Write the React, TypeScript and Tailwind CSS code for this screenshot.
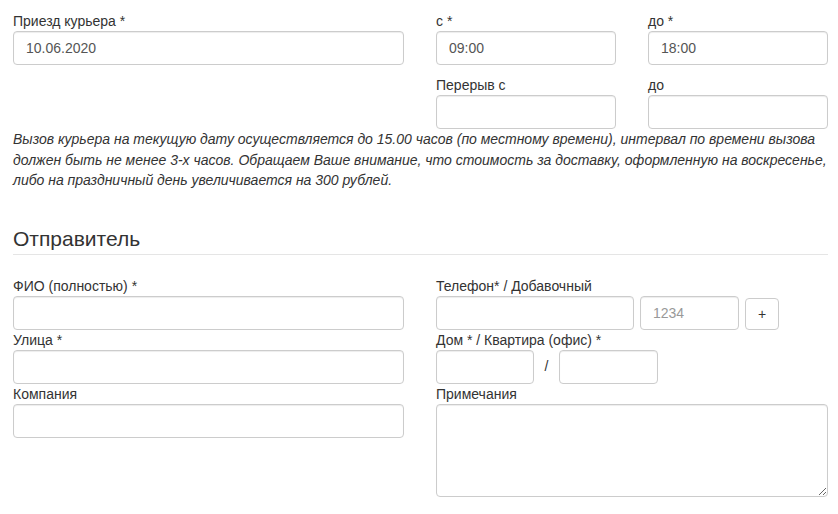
const input =
  "block h-[34px] w-full rounded-[4px] border border-[#ccc] bg-white px-3 text-[14px] text-[#555] shadow-[inset_0_1px_1px_rgba(0,0,0,0.075)] outline-none placeholder:text-[#999]";
const label = "block h-[20px] text-[14px] leading-[20px] text-[#333]";

const Field = ({ title, value }: { title: string; value?: string }) => (
  <div>
    <label className={label}>{title}</label>
    <input className={input} defaultValue={value} />
  </div>
);

const App = () => {
  return (
    <div className="min-h-[514px] bg-white px-[13px] pt-[11px] font-['Liberation_Sans',Arial,sans-serif] text-[#333]">
      {/* время приезда */}
      <div className="grid grid-cols-[391px_392px] gap-x-[32px]">
        <Field title="Приезд курьера *" value="10.06.2020" />
        <div className="grid grid-cols-[180px_180px] gap-x-[32px] gap-y-[10px]">
          <Field title="с *" value="09:00" />
          <Field title="до *" value="18:00" />
          <Field title="Перерыв с" />
          <Field title="до" />
        </div>
      </div>

      <p className="mt-0 w-[815px] text-[14px] italic leading-[20.5px] text-[#333]">
        Вызов курьера на текущую дату осуществляется до 15.00 часов (по местному времени), интервал по времени вызова
        <br />
        должен быть не менее 3-х часов. Обращаем Ваше внимание, что стоимость за доставку, оформленную на воскресенье,
        <br />
        либо на праздничный день увеличивается на 300 рублей.
      </p>

      <div className="mt-[36px] w-[815px] border-b border-[#e5e5e5] pb-[4px]">
        <h3 className="text-[21px] leading-[23px] text-[#333]">Отправитель</h3>
      </div>

      {/* отправитель */}
      <div className="mt-[21px] grid grid-cols-[391px_392px] gap-x-[32px]">
        <div className="flex flex-col">
          <Field title="ФИО (полностью) *" />
          <Field title="Улица *" />
          <Field title="Компания" />
        </div>
        <div className="flex flex-col">
          <label className={label}>Телефон* / Добавочный</label>
          <div className="flex items-start gap-[6px]">
            <input className={input + " !w-[198px]"} />
            <input className={input + " !w-[99px]"} placeholder="1234" />
            <button className="mt-[2px] h-[32px] w-[34px] rounded-[4px] border border-[#ccc] bg-white text-[14px] leading-none text-[#333]">
              +
            </button>
          </div>
          <label className={label}>Дом * / Квартира (офис) *</label>
          <div className="flex items-center">
            <input className={input + " !w-[98px]"} />
            <span className="w-[25px] text-center text-[14px] text-[#333]">/</span>
            <input className={input + " !w-[99px]"} />
          </div>
          <label className={label}>Примечания</label>
          <textarea className="block h-[93px] w-[392px] rounded-[4px] border border-[#ccc] bg-white px-3 py-[6px] text-[14px] text-[#555] shadow-[inset_0_1px_1px_rgba(0,0,0,0.075)] outline-none" />
        </div>
      </div>
    </div>
  );
};

export default App;
